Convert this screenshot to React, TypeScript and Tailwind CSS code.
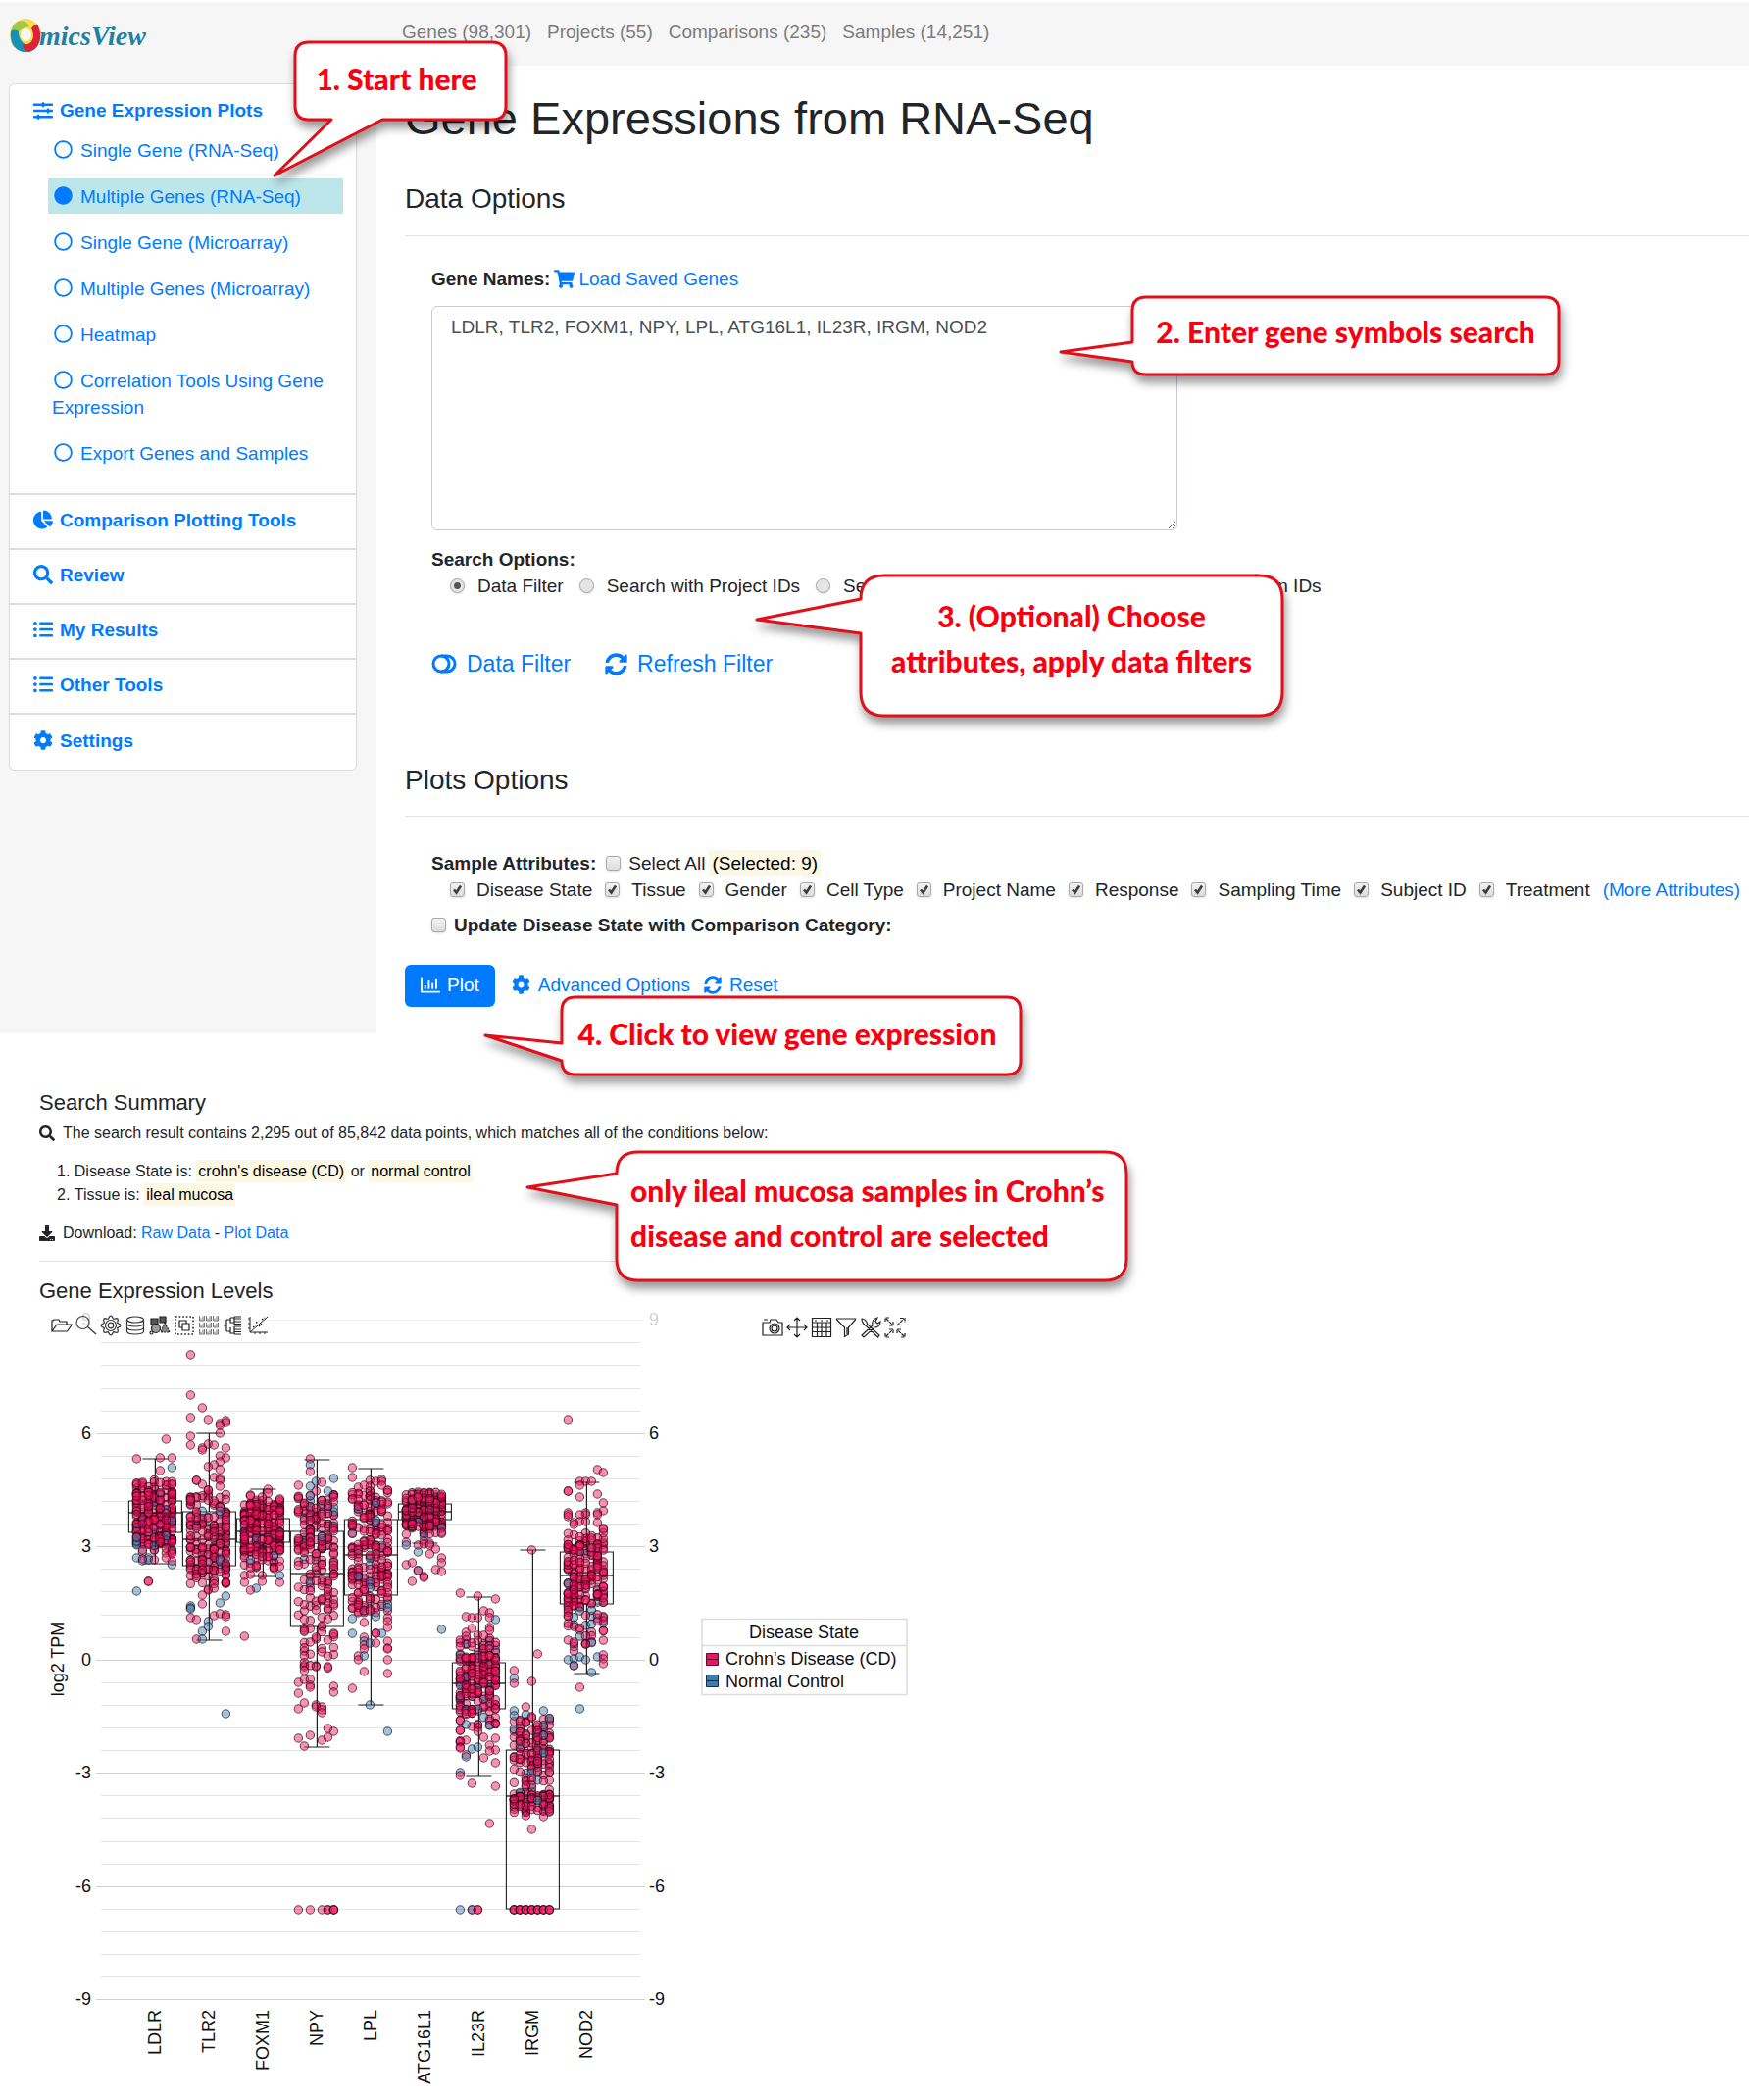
import React from "react";
import { FaChartPie, FaCog, FaDownload, FaListUl, FaRegChartBar, FaRegCircle, FaCircle, FaSearch, FaShoppingCart, FaSlidersH, FaSyncAlt } from "react-icons/fa";

/* ---------- Plot data ---------- */

type Dot = [col: number, y: number, blue?: 1];
type Band = [from: number, to: number, count: number, blueShare: number];
type Gene = { name: string; box: [number, number, number, number, number]; dots: Dot[]; bands: Band[] };

// box: whisker top, box top, median, box bottom, whisker bottom
const genes: Gene[] = [
  {
    name: "LDLR",
    box: [1488, 1531, 1543, 1563, 1595],
    dots: [[5, 1468], [0, 1488], [4, 1487], [6, 1487], [4, 1500], [6, 1497, 1], [2, 1613], [2, 1613], [0, 1623, 1], [0, 1589, 1], [1, 1592, 1], [2, 1589, 1], [2, 1591, 1], [6, 1596, 1], [6, 1592], [6, 1583], [5, 1589], [3, 1591], [6, 1585], [1, 1583, 1], [1, 1581], [1, 1590]],
    bands: [[1508, 1525, 30, 0], [1522, 1575, 190, 0.04], [1566, 1584, 26, 0.3]],
  },
  {
    name: "TLR2",
    box: [1462, 1542, 1570, 1597, 1673],
    dots: [[0, 1382], [0, 1423], [2, 1436], [0, 1446], [3, 1448], [5, 1452], [6, 1449], [6, 1451], [5, 1454], [5, 1462], [0, 1465], [0, 1474], [3, 1473], [4, 1474], [2, 1477], [2, 1479], [6, 1477], [5, 1485], [6, 1487], [5, 1491], [4, 1494], [3, 1496], [5, 1499], [4, 1507], [5, 1508], [5, 1510], [1, 1510], [1, 1510], [2, 1514], [5, 1516], [3, 1520], [3, 1520], [3, 1621], [3, 1622], [4, 1620], [6, 1614], [2, 1627], [2, 1636], [6, 1628, 1], [5, 1635, 1], [0, 1638, 1], [0, 1640, 1], [0, 1641, 1], [0, 1650], [1, 1652], [4, 1648], [5, 1646], [6, 1647], [6, 1649], [3, 1654, 1], [3, 1659, 1], [2, 1664, 1], [6, 1664], [1, 1672], [2, 1672, 1], [6, 1748, 1]],
    bands: [[1524, 1590, 130, 0.04], [1588, 1603, 36, 0.25], [1600, 1616, 24, 0.1]],
  },
  {
    name: "FOXM1",
    box: [1519, 1549, 1562, 1573, 1608],
    dots: [[4, 1519], [1, 1525], [1, 1526], [4, 1523], [6, 1529], [3, 1527], [0, 1607], [0, 1614], [1, 1606], [3, 1607], [3, 1613], [6, 1614], [6, 1607, 1], [2, 1620, 1], [1, 1622], [0, 1669], [5, 1600], [6, 1598], [1, 1591, 1]],
    bands: [[1530, 1545, 38, 0], [1540, 1583, 170, 0.03], [1580, 1600, 26, 0.08]],
  },
  {
    name: "NPY",
    box: [1489, 1562, 1605, 1659, 1782],
    dots: [[2, 1488], [2, 1494, 1], [2, 1501], [6, 1508, 1], [0, 1515], [3, 1511, 1], [4, 1512], [2, 1516, 1], [5, 1521, 1], [6, 1527], [3, 1521], [2, 1526, 1], [1, 1704], [0, 1716], [1, 1713], [2, 1713], [2, 1719], [2, 1721], [0, 1727], [6, 1720], [6, 1726], [0, 1743], [1, 1737], [3, 1739], [3, 1741], [4, 1741], [4, 1744], [4, 1747], [5, 1763], [6, 1766], [2, 1770], [0, 1773], [4, 1775], [5, 1772], [1, 1781], [0, 1948], [2, 1948], [4, 1948], [5, 1948], [5, 1948], [6, 1948], [6, 1948], [6, 1948]],
    bands: [[1524, 1582, 86, 0.24], [1560, 1620, 66, 0.06], [1620, 1662, 34, 0], [1662, 1702, 28, 0]],
  },
  {
    name: "LPL",
    box: [1498, 1550, 1586, 1627, 1739],
    dots: [[0, 1497], [0, 1507], [1, 1517], [2, 1515], [3, 1510], [4, 1511], [5, 1509], [5, 1511], [6, 1520], [5, 1515], [3, 1516], [6, 1640, 1], [4, 1649, 1], [3, 1643], [0, 1651, 1], [2, 1655], [0, 1666, 1], [5, 1666, 1], [4, 1666], [4, 1666], [6, 1650], [6, 1654], [6, 1660], [2, 1670], [2, 1674, 1], [2, 1678], [2, 1682], [3, 1676, 1], [4, 1676], [6, 1674], [6, 1681], [6, 1682], [1, 1689], [1, 1693], [2, 1689, 1], [6, 1693], [2, 1705], [6, 1707], [0, 1722], [3, 1739, 1], [6, 1766, 1]],
    bands: [[1520, 1580, 95, 0.02], [1575, 1612, 60, 0.08], [1605, 1645, 62, 0.2]],
  },
  {
    name: "ATG16L1",
    box: [1521, 1534, 1542, 1550, 1574],
    dots: [[0, 1573], [0, 1576, 1], [3, 1567, 1], [2, 1576], [3, 1572], [3, 1575], [4, 1574], [4, 1576], [5, 1580], [4, 1585], [2, 1583, 1], [6, 1563], [6, 1589], [6, 1594], [0, 1596], [1, 1594], [2, 1602, 1], [2, 1602], [3, 1608], [3, 1609], [5, 1601], [6, 1603], [1, 1613], [6, 1662, 1]],
    bands: [[1522, 1558, 205, 0.04], [1552, 1565, 22, 0.1]],
  },
  {
    name: "IL23R",
    box: [1629, 1696, 1717, 1743, 1812],
    dots: [[0, 1625], [3, 1628], [6, 1631], [4, 1643], [5, 1645], [1, 1649], [2, 1650], [3, 1650], [5, 1650], [6, 1652, 1], [1, 1665], [2, 1661], [5, 1660], [5, 1663], [3, 1668], [4, 1668], [1, 1669], [0, 1765], [0, 1765], [2, 1761], [3, 1762], [3, 1766], [1, 1759, 1], [5, 1760, 1], [6, 1758], [1, 1775], [0, 1776], [0, 1777], [0, 1776], [0, 1782], [0, 1783], [4, 1772], [6, 1773], [2, 1784, 1], [3, 1782, 1], [5, 1780], [6, 1785], [5, 1786], [1, 1790], [1, 1792, 1], [4, 1793], [6, 1798], [0, 1808, 1], [0, 1811], [2, 1819], [6, 1822], [5, 1860], [0, 1948, 1], [2, 1948], [2, 1948, 1], [3, 1948], [3, 1948]],
    bands: [[1671, 1690, 26, 0.12], [1688, 1746, 158, 0.07], [1742, 1760, 22, 0.1]],
  },
  {
    name: "IRGM",
    box: [1581, 1785, 1832, 1947, 1947],
    dots: [[3, 1581], [4, 1687], [0, 1704], [0, 1712, 1], [0, 1717], [3, 1715], [2, 1741], [0, 1745, 1], [0, 1750, 1], [2, 1749, 1], [3, 1751], [5, 1745, 1], [6, 1753, 1], [1, 1756], [2, 1757], [2, 1852], [5, 1853], [3, 1866], ...[0, 1, 2, 3, 4, 5, 6].flatMap((c): Dot[] => [[c, 1948], [c, 1948], [c, 1948]])],
    bands: [[1752, 1775, 30, 0.12], [1770, 1800, 64, 0.1], [1795, 1818, 26, 0.05], [1818, 1831, 12, 0.3], [1830, 1849, 72, 0.02]],
  },
  {
    name: "NOD2",
    box: [1512, 1583, 1607, 1636, 1707],
    dots: [[0, 1448], [5, 1499], [6, 1502], [2, 1511], [3, 1511], [4, 1511], [2, 1515], [0, 1521], [0, 1521], [2, 1527], [5, 1524], [6, 1533], [6, 1541], [5, 1543], [0, 1543], [3, 1543], [3, 1545], [2, 1545], [5, 1545], [0, 1547], [0, 1545], [2, 1552], [3, 1552], [1, 1553], [5, 1553], [1, 1555], [6, 1559], [6, 1560], [0, 1693, 1], [1, 1692, 1], [2, 1690, 1], [3, 1693, 1], [5, 1690, 1], [6, 1688], [6, 1692], [6, 1697], [1, 1699], [1, 1699, 1], [1, 1684], [4, 1706, 1], [2, 1721], [2, 1743, 1]],
    bands: [[1563, 1582, 32, 0], [1575, 1640, 150, 0.05], [1640, 1680, 40, 0.3]],
  },
];

const seeded = (seed: number) => () => {
  seed = (seed * 1664525 + 1013904223) % 4294967296;
  return seed / 4294967296;
};

const rand = seeded(20190);
const plotted = genes.map((g) => ({
  ...g,
  all: [
    ...g.bands.flatMap(([from, to, count, share]) =>
      Array.from({ length: count }, (): Dot => {
        const col = Math.floor(rand() * 7);
        const y = from + rand() * (to - from);
        return rand() < share ? [col, y, 1] : [col, y];
      })
    ),
    ...g.dots,
  ],
}));

const PINK = "#f8105f";
const BLUE = "#3b7fb0";
const ZERO = 1692.7;
const UNIT = 38.5;

function Plot() {
  const minors = Array.from({ length: 31 }, (_, i) => 9 - i * 0.6).filter((v) => Math.abs(v / 3 - Math.round(v / 3)) > 0.01);
  return (
    <svg viewBox="0 1334 960 808" className="block h-[808px] w-[960px]" role="img" aria-label="Gene expression levels" fontFamily="'Liberation Sans', Arial, sans-serif" fontSize="18" fill="#111">
      {minors.map((v) => (
        <path key={v} d={`M103 ${Math.round(ZERO - v * UNIT) + 0.5}H653`} stroke="#e3e3e3" />
      ))}
      {[9, 6, 3, 0, -3, -6, -9].map((v) => {
        const y = Math.round(ZERO - v * UNIT);
        return (
          <g key={v} opacity={v === 9 ? 0.2 : 1}>
            <path d={`M98 ${y + 0.5}H658`} stroke={v === 9 ? "#bbb" : "#d0d0d0"} />
            <text x="93" y={y + 6} textAnchor="end">{v}</text>
            <text x="662" y={y + 6}>{v}</text>
          </g>
        );
      })}
      <text transform="translate(65 1692) rotate(-90)" textAnchor="middle">log2 TPM</text>
      {plotted.map((g, i) => {
        const cx = 158.4 + i * 55;
        const [wt, top, med, bot, wb] = g.box;
        return (
          <g key={g.name}>
            <path
              d={`M${cx - 13} ${wt}h26M${cx} ${wt}V${top}M${cx} ${bot}V${wb}M${cx - 13} ${wb}h26M${cx - 27} ${top}h54V${bot}h-54ZM${cx - 27} ${med}h54`}
              fill="none"
              stroke="#222"
              strokeWidth="1.1"
            />
            {g.all.map(([c, y, b], n) => (
              <circle key={n} cx={cx - 19 + c * 6} cy={y} r="4.2" fill={b ? BLUE : PINK} fillOpacity="0.47" stroke="#1a0710" strokeOpacity="0.65" strokeWidth="1.1" />
            ))}
            <path d={`M${cx} ${wt}V${top}M${cx} ${bot}V${wb}M${cx - 27} ${med}h54`} stroke="#111" strokeOpacity="0.5" />
            <text transform={`translate(${cx + 6} 2050) rotate(-90)`} textAnchor="end">{g.name}</text>
          </g>
        );
      })}
      <g>
        <path d="M716 1651.500h209v77h-209ZM716 1678.500h209" fill="none" stroke="#dcdcdc" strokeWidth="1.500" />
        <text x="820" y="1671" textAnchor="middle">Disease State</text>
        <path d="M720.500 1686.500h12v12h-12ZM720.500 1692.500h12" fill={PINK} stroke="#5a1030" />
        <text x="740" y="1698">Crohn's Disease (CD)</text>
        <path d="M720.500 1708.500h12v12h-12ZM720.500 1714.500h12" fill={BLUE} stroke="#12304a" />
        <text x="740" y="1721">Normal Control</text>
      </g>
    </svg>
  );
}

/* ---------- Plot toolbar ---------- */

const gear = Array.from({ length: 49 }, (_, i) => {
  const a = (i / 48) * Math.PI * 2;
  const r = 8.6 + Math.cos(a * 8) * 1.3;
  return `${i ? "L" : "M"}${(11 + r * Math.sin(a)).toFixed(1)} ${(11 - r * Math.cos(a)).toFixed(1)}`;
}).join("");

const leftTools: [string, React.ReactNode][] = [
  ["Open", <path d="M1 17V6h1l1-1h5l1 2h7v3M1 17l5-7h15.500l-5 7Z" />],
  ["Zoom", <g stroke="#444"><circle cx="7.500" cy="8" r="6.500" /><path d="M12.500 12.500l8.500 7.500" strokeWidth="1.600" /></g>],
  ["Settings", <g stroke="#333"><circle cx="11" cy="11" r="2.800" /><circle cx="11" cy="11" r="5.500" /><path d={gear} /></g>],
  ["Data", <g stroke="#333"><ellipse cx="11" cy="5" rx="8.500" ry="3" /><path d="M2.500 5v12c0 4 17 4 17 0v-12M2.500 9c0 4 17 4 17 0M2.500 13c0 4 17 4 17 0" /></g>],
  ["Shapes", <g><path d="M2 4h7v6H2ZM11 2h6v6h-6Z" fill="#555" /><circle cx="7" cy="14" r="4.500" fill="#999" /><path d="M16 8l5 10h-9Z" fill="#888" strokeDasharray="2 1" /><circle cx="2.500" cy="18.500" r="1.500" fill="#fff" /></g>],
  ["Group", <g><path d="M2 2h18v18H2Z" strokeDasharray="1.600 2" strokeWidth="1.600" /><path d="M6 6h7v7H6Z" /><path d="M9 9h7v7H9Z" fill="#fff" /></g>],
  ["Layout", <g stroke="#777" strokeWidth="1">{[1.5, 8.5, 15.5].flatMap((x) => [2.5, 9.5, 16.5].map((y) => <path key={`${x}-${y}`} d={`M${x} ${y - 1.5}v5h5v-5M${x + 1.5} ${y + 1}v2M${x + 3.5} ${y - 1}v4`} />))}</g>],
  ["Cluster", <path d="M1 11h3M4 5v12M4 5h4M8 3v5h4M4 17h4M8 13v6h4M8 3h4M12 2h7M12 4h7M12 7h7M12 9.500h7M12 12h7M12 15h7M12 17.500h7M12 20h7M12 2v8M12 12v8" strokeWidth="1.200" />],
  ["Scatter", <g><path d="M3 2v16h18M1 4h2M1 9h2M1 14h2M8 18v2M13 18v2M18 18v2M3 18L21 2" strokeWidth="1" /><path d="M6 13l3-2M9 8l3-1M12 12l3-3M15 5l3-2" strokeDasharray="1.500 1.500" strokeWidth="1.500" /></g>],
];

const rightTools: [string, React.ReactNode][] = [
  ["Snapshot", <g><path d="M1 6h7l1-3h6l2 3h4v13H1ZM2 3h4" /><circle cx="13" cy="12" r="5" /><circle cx="13" cy="12" r="3" /></g>],
  ["Move", <path d="M11 1v20M1 11h20M8 4l3-3 3 3M8 18l3 3 3-3M4 8l-3 3 3 3M18 8l3 3-3 3" />],
  ["Table", <path d="M1.500 1.500h19v19h-19ZM1.500 6h19M1.500 11h19M1.500 15.500h19M6.500 6v14M11 6v14M16 6v14M4 4h2M10 4h2M16 4h2" />],
  ["Filter", <path d="M1.500 2h19v1l-7 8v7l-4 2.500V11l-8-8ZM12 11v7" />],
  ["Tools", <path d="M2 2c3 0 5 3 6 6l12 11-1.500 2L7 10C4 8 2 5 2 2ZM13 9c-1-4 1-7 5-8l-2 4 2 2 3-2c0 4-3 6-6 6L4 21l-2-2L13 9Z" />],
  ["Fullscreen", <path d="M2 2l7 7M9 5v4H5M1 5V1h4M13 9l7-7M16 1.500h5V6M2 20l7-7M5 13h4v4M1 17v4h4M20 20l-7-7M13 17v-4h4M17 21h4v-4" strokeDasharray="3.500 1" />],
];

function Tools({ items }: { items: [string, React.ReactNode][] }) {
  return (
    <div className="flex gap-[3px]">
      {items.map(([label, art]) => (
        <button key={label} type="button" aria-label={label} className="size-[22px]">
          <svg viewBox="0 0 22 22" className="size-[22px]" fill="none" stroke="#222" strokeWidth="1.2">{art}</svg>
        </button>
      ))}
    </div>
  );
}

/* ---------- Form pieces ---------- */

function Check({ id, label, checked = false, className }: { id: string; label: React.ReactNode; checked?: boolean; className: string }) {
  return (
    <label htmlFor={id} className={`flex items-center ${className}`}>
      <span className="grid">
        <input id={id} type="checkbox" defaultChecked={checked} className="peer col-start-1 row-start-1 size-[15px] appearance-none rounded-[3px] border border-[#a9a9a9] bg-linear-to-b from-[#f2f2f2] to-[#dcdcdc] shadow-sm" />
        <svg viewBox="0 0 15 15" className="pointer-events-none invisible col-start-1 row-start-1 size-[15px] peer-checked:visible" fill="none" stroke="#3c3c3c" strokeWidth="2.6">
          <path d="M4 7.500l2.500 3L11 3.500" />
        </svg>
      </span>
      {label}
    </label>
  );
}

function Radio({ id, label, checked = false }: { id: string; label: string; checked?: boolean }) {
  return (
    <label htmlFor={id} className="flex items-center gap-[13px] whitespace-nowrap">
      <input id={id} name="search-option" type="radio" defaultChecked={checked} className="size-[15px] appearance-none rounded-full border border-[#a9a9a9] bg-[#e4e4e4] shadow-sm checked:bg-[radial-gradient(circle,#555_0_3px,#e4e4e4_4px)]" />
      {label}
    </label>
  );
}

const plotLinks = ["Single Gene (RNA-Seq)", "Multiple Genes (RNA-Seq)", "Single Gene (Microarray)", "Multiple Genes (Microarray)", "Heatmap", "Correlation Tools Using Gene Expression", "Export Genes and Samples"];

const menu = [
  { label: "Comparison Plotting Tools", Icon: FaChartPie },
  { label: "Review", Icon: FaSearch },
  { label: "My Results", Icon: FaListUl },
  { label: "Other Tools", Icon: FaListUl },
  { label: "Settings", Icon: FaCog },
];

const attributes = ["Disease State", "Tissue", "Gender", "Cell Type", "Project Name", "Response", "Sampling Time", "Subject ID", "Treatment"];

function Logo() {
  return (
    <a href="#home" aria-label="OmicsView" className="flex items-end">
      <svg viewBox="0 0 32 36" className="h-9 w-8">
        <ellipse cx="16" cy="18" rx="15.500" ry="17" fill="#f8dc4c" />
        <path d="M8 4C-2 10-1 25 5 31C2 20 8 11 20 9C18 4 13 2 8 4Z" fill="#a3c644" />
        <path d="M1 15C0 30 10 36 18 35C24 34 28 31 29 27C20 31 9 27 9 14C5 12 2 12 1 15Z" fill="#1591b9" />
        <path d="M28 7C34 17 32 30 20 35C15 34 13 30 13 27C22 29 27 20 22 11C24 8 27 6 28 7Z" fill="#dc2238" />
        <ellipse cx="16.500" cy="17.500" rx="5.500" ry="6.500" fill="#f6f6f6" />
      </svg>
      <span className="-ml-0.5 font-['Liberation_Serif',serif] text-[28px] leading-[34px] font-bold text-[#1b82a5] italic">micsView</span>
    </a>
  );
}

function Callout({ className, path, text, lines }: { className: string; path: string; text: string; lines: string[] }) {
  return (
    <div className={`absolute z-10 font-[Lato,sans-serif] font-black text-[#f8000f] ${className}`}>
      <svg className="absolute inset-0 size-full overflow-visible drop-shadow-[2px_7px_5px_rgba(0,0,0,0.4)]">
        <path d={path} fill="#fff" stroke="#e10f1a" strokeWidth="3" strokeLinejoin="round" />
      </svg>
      <p className={`relative text-[30px] leading-[46px] whitespace-nowrap ${text}`}>
        {lines.map((l) => (
          <span key={l} className="block">{l}</span>
        ))}
      </p>
    </div>
  );
}

export default function App() {
  return (
    <div className="relative overflow-x-hidden bg-white pt-0.5 font-['Liberation_Sans',Arial,sans-serif] text-[19px] leading-[27px] text-[#212529]">
      <header className="flex h-[65px] bg-[#f6f6f6]">
        <div className="w-96 shrink-0 pt-4 pl-2.5"><Logo /></div>
        <nav className="flex gap-4 pt-[17px] pl-[26px] text-[#7c7c7c]">
          <a href="#genes">Genes (98,301)</a>
          <a href="#projects">Projects (55)</a>
          <a href="#comparisons">Comparisons (235)</a>
          <a href="#samples">Samples (14,251)</a>
        </nav>
      </header>

      <div className="flex">
        <aside className="w-96 shrink-0 bg-[#f6f6f6] pt-[18px] pr-5 pl-[9px] text-[#007bff]">
          <div className="divide-y-2 divide-[#dedede] rounded-md border border-[#dcdcdc] bg-white">
            <section className="h-[419px] pt-[13px]">
              <a href="#expression" className="flex items-center gap-[7px] pl-6 font-bold"><FaSlidersH className="size-5" />Gene Expression Plots</a>
              <ul className="mt-[9px] flex flex-col gap-[11px] pr-[13px] pl-[39px]">
                {plotLinks.map((l, i) => (
                  <li key={l}>
                    <a href="#plot" className={`block pt-[5px] pr-2 pb-1 pl-1 ${i === 1 ? "bg-[#bce6ea]" : ""}`}>
                      {i === 1 ? <FaCircle className="mr-2 ml-0.5 inline size-[19px] align-[-2px]" /> : <FaRegCircle className="mr-2 ml-0.5 inline size-[19px] align-[-2px]" />}
                      {l}
                    </a>
                  </li>
                ))}
              </ul>
            </section>
            {menu.map(({ label, Icon }) => (
              <a key={label} href="#menu" className="flex h-14 items-center gap-[7px] pb-1 pl-6 font-bold"><Icon className="size-5" />{label}</a>
            ))}
          </div>
        </aside>

        <main className="min-w-0 flex-1 pt-[26px] pb-[27px] pl-[29px]">
          <h1 className="text-[47px] leading-[56px]">Gene Expressions from RNA-Seq</h1>

          <h2 className="mt-[37px] text-[28px] leading-[34px]">Data Options</h2>
          <hr className="mt-5 border-[#e2e2e2]" />
          <div className="pl-[27px]">
            <div className="mt-[30px] flex items-center gap-1">
              <label htmlFor="genes" className="font-bold">Gene Names:</label>
              <a href="#load" className="flex items-center gap-1 text-[#007bff]"><FaShoppingCart className="size-[21px]" />Load Saved Genes</a>
            </div>
            <textarea id="genes" defaultValue="LDLR, TLR2, FOXM1, NPY, LPL, ATG16L1, IL23R, IRGM, NOD2" className="mt-3.5 block h-[229px] w-[761px] max-w-full resize rounded-md border border-[#c6ccd2] px-[19px] py-[7px] text-[#495057]" />
            <fieldset className="mt-4">
              <legend className="font-bold">Search Options:</legend>
              <div className="flex gap-4 pl-[19px]">
                <Radio id="by-filter" label="Data Filter" checked />
                <Radio id="by-project" label="Search with Project IDs" />
                <Radio id="by-sample" label="Search with Sample IDs" />
                <Radio id="by-comparison" label="Search with Comparison IDs" />
              </div>
            </fieldset>
            <div className="mt-[49px] flex gap-[35px] text-[23px] leading-[34px] text-[#007bff]">
              <button type="button" className="flex items-center gap-2.5">
                <svg viewBox="0 0 26 20" className="h-5 w-[26px]" fill="none" stroke="currentColor" strokeWidth="3">
                  <path d="M10 2h6a8 8 0 0 1 0 16h-6" />
                  <circle cx="10" cy="10" r="8" />
                </svg>
                Data Filter
              </button>
              <button type="button" className="flex items-center gap-2.5"><FaSyncAlt className="size-[23px]" />Refresh Filter</button>
            </div>
          </div>

          <h2 className="mt-[85px] text-[28px] leading-[34px]">Plots Options</h2>
          <hr className="mt-[19px] border-[#e2e2e2]" />
          <div className="pl-[27px]">
            <div className="mt-[34px] flex items-center">
              <span className="mr-2.5 font-bold">Sample Attributes:</span>
              <Check id="all" label="Select All" className="gap-2" />
              <mark className="ml-1 bg-[#fcf8e3] px-[3px] text-black">(Selected: 9)</mark>
            </div>
            <div className="flex gap-[13px] pl-[19px] whitespace-nowrap">
              {attributes.map((a) => (
                <Check key={a} id={a} label={a} checked className="gap-3" />
              ))}
              <a href="#more" className="text-[#007bff]">(More Attributes)</a>
            </div>
            <div className="mt-[9px] flex font-bold">
              <Check id="update" label="Update Disease State with Comparison Category:" className="gap-2" />
            </div>
          </div>
          <div className="mt-[27px] flex items-center text-[#007bff]">
            <button type="button" className="flex h-[43px] items-center gap-[7px] rounded-md bg-[#007bff] px-4 pb-0.5 text-white"><FaRegChartBar className="size-5" />Plot</button>
            <a href="#advanced" className="ml-[17px] flex items-center gap-2 pb-0.5"><FaCog className="size-[19px]" />Advanced Options</a>
            <a href="#reset" className="ml-3.5 flex items-center gap-2 pb-0.5"><FaSyncAlt className="size-[18px]" />Reset</a>
          </div>
        </main>
      </div>

      <section className="px-10 pt-[58px] text-base leading-6">
        <h3 className="text-[22px] leading-[26px]">Search Summary</h3>
        <p className="mt-1.5 flex items-center gap-2"><FaSearch className="size-4" />The search result contains 2,295 out of 85,842 data points, which matches all of the conditions below:</p>
        <ol className="mt-[15px] list-inside list-decimal pl-[18px]">
          <li>Disease State is: <mark className="bg-[#fcf8e3] px-0.5 py-[3px] text-black">crohn's disease (CD)</mark> or <mark className="bg-[#fcf8e3] px-0.5 py-[3px] text-black">normal control</mark></li>
          <li>Tissue is: <mark className="bg-[#fcf8e3] px-0.5 py-[3px] text-black">ileal mucosa</mark></li>
        </ol>
        <p className="mt-[15px] flex items-center">
          <FaDownload className="mr-2 size-4" />Download:&nbsp;<a href="#raw" className="text-[#007bff]">Raw Data</a>&nbsp;-&nbsp;<a href="#plotdata" className="text-[#007bff]">Plot Data</a>
        </p>
        <hr className="mt-4 max-w-[1000px] border-[#e2e2e2]" />
        <h3 className="mt-[17px] text-[22px] leading-[26px]">Gene Expression Levels</h3>
      </section>

      <figure className="relative mt-1">
        <Plot />
        <div className="absolute top-[7px] left-[52px]"><Tools items={leftTools} /></div>
        <div className="absolute top-[9px] left-[777px]"><Tools items={rightTools} /></div>
      </figure>

      <Callout
        className="top-[43px] left-[301px] h-[79px] w-[215px]"
        path="M14 0H201Q215 0 215 14V65Q215 79 201 79H89L-21 136L37 79H14Q0 79 0 65V14Q0 0 14 0Z"
        text="pt-3.5 pr-2 text-center"
        lines={["1. Start here"]}
      />
      <Callout
        className="top-[303px] left-[1155px] h-[79px] w-[435px]"
        path="M14 0H421Q435 0 435 14V65Q435 79 421 79H14Q0 79 0 66L-73 56L0 46V14Q0 0 14 0Z"
        text="pt-3 text-center"
        lines={["2. Enter gene symbols search"]}
      />
      <Callout
        className="top-[587px] left-[878px] h-[143px] w-[430px]"
        path="M24 0H406Q430 0 430 24V119Q430 143 406 143H24Q0 143 0 119V59L-106 45L0 24Q0 0 24 0Z"
        text="pt-[18px] text-center"
        lines={["3. (Optional) Choose", "attributes, apply data filters"]}
      />
      <Callout
        className="top-[1017px] left-[573px] h-[79px] w-[468px]"
        path="M14 0H454Q468 0 468 14V65Q468 79 454 79H14Q0 79 0 65L-78 39L0 47V14Q0 0 14 0Z"
        text="pt-3.5 pr-2 text-center"
        lines={["4. Click to view gene expression"]}
      />
      <Callout
        className="top-[1175px] left-[629px] h-[131px] w-[520px]"
        path="M22 0H498Q520 0 520 22V109Q520 131 498 131H22Q0 131 0 109V54L-91 36L0 22Q0 0 22 0Z"
        text="pt-4 pl-3.5"
        lines={["only ileal mucosa samples in Crohn’s", "disease and control are selected"]}
      />
    </div>
  );
}
